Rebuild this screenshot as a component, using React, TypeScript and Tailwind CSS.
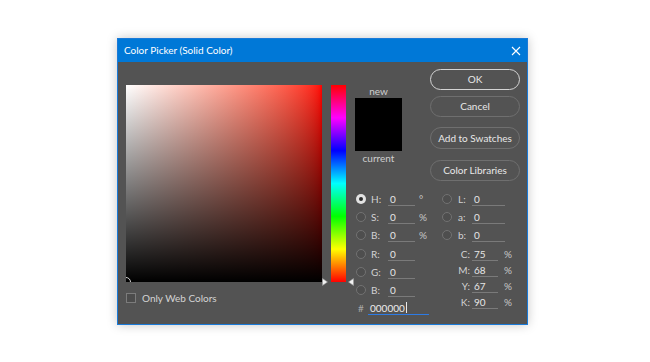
import React from "react";

function Radio({ on = false }: { on?: boolean }) {
  return on ? (
    <div className="w-[10px] h-[10px] rounded-full bg-[#e2e2e2] flex items-center justify-center shrink-0">
      <div className="w-[4px] h-[4px] rounded-full bg-[#2b2b2b]" />
    </div>
  ) : (
    <div className="w-[10px] h-[10px] rounded-full border border-[#727272] bg-[#4e4e4e] shrink-0" />
  );
}

function LeftRow({ label, value, unit, on }: { label: string; value: string; unit?: string; on?: boolean }) {
  return (
    <div className="h-[18px] flex items-center pl-[1px]">
      <Radio on={on} />
      <div className="ml-[5px] w-[17px] leading-[12px] text-[#d2d2d2]">{label}</div>
      <div className="w-[27px] h-[13px] leading-[12px] border-b border-[#7a7a7a] pl-[2px] text-[#e6e6e6]">{value}</div>
      {unit && <div className="ml-[4px] leading-[12px] text-[#c8c8c8]">{unit}</div>}
    </div>
  );
}

function LabRow({ label, value }: { label: string; value: string }) {
  return (
    <div className="h-[18px] flex items-center">
      <Radio />
      <div className="ml-[6px] w-[14px] leading-[12px] text-[#d2d2d2]">{label}</div>
      <div className="w-[33px] h-[13px] leading-[12px] border-b border-[#7a7a7a] pl-[2px] text-[#e6e6e6]">{value}</div>
    </div>
  );
}

function CmykRow({ label, value }: { label: string; value: string }) {
  return (
    <div className="h-[16px] flex items-center">
      <div className="w-[28px] text-right leading-[12px] text-[#d2d2d2]">{label}</div>
      <div className="ml-[2px] w-[26px] h-[13px] leading-[12px] border-b border-[#7a7a7a] pl-[2px] text-[#e6e6e6]">{value}</div>
      <div className="ml-[6px] leading-[12px] text-[#c8c8c8]">%</div>
    </div>
  );
}

function Btn({ children, focus = false, cls = "" }: { children: React.ReactNode; focus?: boolean; cls?: string }) {
  return (
    <div
      className={
        "h-[21px] rounded-full flex items-center justify-center text-[#e8e8e8] " +
        (focus ? "border-[1.5px] border-[#d4d4d4] " : "border border-[#6f6f6f] ") +
        cls
      }
    >
      {children}
    </div>
  );
}

export default function App() {
  return (
    <div className="w-[650px] h-[362px] bg-white pl-[117px] pt-[38px] font-['Lato',sans-serif] text-[10px]">
      <div className="w-[411px] h-[287px] border border-[#1a7ad8] bg-[#535353] shadow-[0_0_10px_rgba(0,0,0,0.22)] flex flex-col">
        {/* Title bar */}
        <div className="h-[23px] bg-[#0078d7] flex items-center justify-between pl-[6px] pr-[6px] text-white">
          <span className="text-[10px]">Color Picker (Solid Color)</span>
          <svg width="10" height="10" viewBox="0 0 10 10" className="mr-[0px]">
            <path d="M1 1 L9 9 M9 1 L1 9" stroke="white" strokeWidth="1.1" />
          </svg>
        </div>

        {/* Body */}
        <div className="flex-1 flex flex-row">
          {/* Field column */}
          <div className="ml-[8px] mt-[23px] flex flex-col">
            <div className="relative w-[196px] h-[197px] overflow-hidden bg-linear-to-r from-white to-[#ff0000]">
              <div className="absolute inset-0 bg-linear-to-t from-black to-transparent" />
              <div className="absolute left-[-5px] bottom-[-5px] w-[10px] h-[10px] rounded-full border border-[#d8d8d8]" />
            </div>
            <div className="mt-[11px] flex items-center h-[10px]">
              <div className="w-[10px] h-[10px] border border-[#7c7c7c] bg-[#4c4c4c]" />
              <span className="ml-[6px] text-[#d4d4d4] leading-[12px]">Only Web Colors</span>
            </div>
          </div>

          {/* Hue slider */}
          <div className="ml-[9px] mt-[23px] relative w-[15px] h-[197px] bg-[linear-gradient(to_bottom,#ff0000,#ff00ff,#0000ff,#00ffff,#00ff00,#ffff00,#ff0000)]">
            <svg className="absolute left-[-9px] bottom-[-4px]" width="6" height="8" viewBox="0 0 6 8">
              <path d="M0.5 0.5 L5.5 4 L0.5 7.5 Z" fill="#f2f2f2" stroke="#9a9a9a" strokeWidth="0.6" />
            </svg>
            <svg className="absolute right-[-8px] bottom-[-4px]" width="6" height="8" viewBox="0 0 6 8">
              <path d="M5.5 0.5 L0.5 4 L5.5 7.5 Z" fill="#f2f2f2" stroke="#9a9a9a" strokeWidth="0.6" />
            </svg>
          </div>

          {/* Right part */}
          <div className="ml-[9px] w-[165px] flex flex-col">
            <div className="h-[119px] flex flex-row">
              <div className="w-[47px] flex flex-col items-center">
                <div className="mt-[22px] h-[14px] leading-[14px] text-[#cfcfcf]">new</div>
                <div className="w-[47px] h-[53px] bg-black" />
                <div className="h-[14px] leading-[14px] text-[#cfcfcf]">current</div>
              </div>
              <div className="ml-[28px] w-[90px] mt-[7px] flex flex-col">
                <Btn focus>OK</Btn>
                <Btn cls="mt-[6px]">Cancel</Btn>
                <Btn cls="mt-[10px] h-[22px]">Add to Swatches</Btn>
                <Btn cls="mt-[11px]">Color Libraries</Btn>
              </div>
            </div>

            <div className="mt-[9px] flex flex-row">
              <div className="w-[87px] flex flex-col">
                <LeftRow label="H:" value="0" unit="°" on />
                <LeftRow label="S:" value="0" unit="%" />
                <LeftRow label="B:" value="0" unit="%" />
                <div className="mt-[1px]">
                  <LeftRow label="R:" value="0" />
                  <LeftRow label="G:" value="0" />
                  <LeftRow label="B:" value="0" />
                  <div className="h-[18px] flex items-center pl-[1px]">
                    <div className="w-[12px] pl-[2px] leading-[12px] text-[#a8a8a8]">#</div>
                    <div className="w-[61px] h-[13px] leading-[12px] border-b border-[#2d7be5] pl-[2px] text-[#ececec] flex items-center">
                      <span>000000</span>
                      <span className="ml-[1px] w-[1px] h-[11px] bg-[#e8e8e8]" />
                    </div>
                  </div>
                </div>
              </div>
              <div className="flex flex-col">
                <LabRow label="L:" value="0" />
                <LabRow label="a:" value="0" />
                <LabRow label="b:" value="0" />
                <div className="mt-[2px]">
                  <CmykRow label="C:" value="75" />
                  <CmykRow label="M:" value="68" />
                  <CmykRow label="Y:" value="67" />
                  <CmykRow label="K:" value="90" />
                </div>
              </div>
            </div>
          </div>
        </div>
      </div>
    </div>
  );
}
